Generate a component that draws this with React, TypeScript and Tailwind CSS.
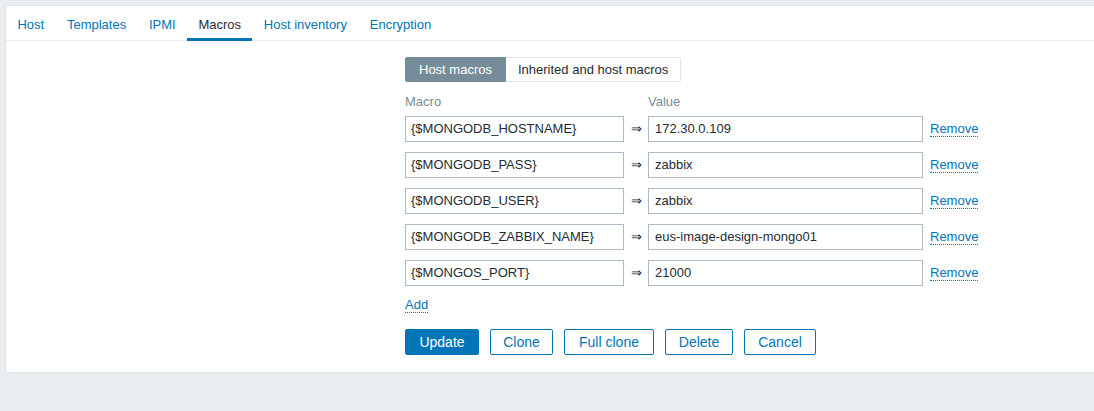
import React from "react";

const macros = [
  { name: "{$MONGODB_HOSTNAME}", value: "172.30.0.109" },
  { name: "{$MONGODB_PASS}", value: "zabbix" },
  { name: "{$MONGODB_USER}", value: "zabbix" },
  { name: "{$MONGODB_ZABBIX_NAME}", value: "eus-image-design-mongo01" },
  { name: "{$MONGOS_PORT}", value: "21000" },
];

const tabs = ["Host", "Templates", "IPMI", "Macros", "Host inventory", "Encryption"];

const secondary = [
  { label: "Clone", w: "w-[63px]" },
  { label: "Full clone", w: "w-[90px]" },
  { label: "Delete", w: "w-[68px]" },
  { label: "Cancel", w: "w-[72px]" },
];

export default function App() {
  return (
    <div
      className="w-[1094px] h-[411px] bg-[#ebeef0] pt-[5px] pl-[5px] overflow-hidden"
      style={{ fontFamily: '"Liberation Sans", Arial, sans-serif' }}
    >
      <div className="bg-white border border-r-0 border-[#dfe4e7] h-[368px]">
        <div className="flex h-[35px] border-b border-[#ebeef0] text-[13px]">
          {tabs.map((t) => (
            <div
              key={t}
              className={
                t === "Macros"
                  ? "px-[11.4px] flex items-center pt-[5px] border-b-[3px] border-[#0275b8] text-[#1f2c33] h-[35px] mb-[-1px]"
                  : "px-[11.4px] flex items-center pt-[5px] border-b-[3px] border-transparent text-[#0275b8] h-[35px] mb-[-1px]"
              }
            >
              {t}
            </div>
          ))}
        </div>

        <div className="pl-[399px] pt-[16px] text-[13px] text-[#1f2c33]">
          <div className="flex h-[25px]">
            <div className="bg-[#768d99] text-white px-[13px] flex items-center rounded-l-[2px] border border-[#768d99]">
              Host macros
            </div>
            <div className="bg-white px-[12px] flex items-center border border-l-0 border-[#dfe4e7] rounded-r-[2px]">
              Inherited and host macros
            </div>
          </div>

          <div className="flex mt-[13px] h-[14px] leading-[14px] text-[#768d99]">
            <div className="w-[243px]">Macro</div>
            <div>Value</div>
          </div>

          <div className="flex flex-col gap-[10px] mt-[7px]">
            {macros.map((m) => (
              <div key={m.name} className="flex items-center h-[26px]">
                <div className="w-[219px] h-[26px] border border-[#acbbc4] px-[5px] flex items-center">
                  {m.name}
                </div>
                <div className="w-[24px] text-center">⇒</div>
                <div className="w-[275px] h-[26px] border border-[#acbbc4] px-[6px] flex items-center">
                  {m.value}
                </div>
                <span className="ml-[7px] text-[#0275b8] border-b border-dotted border-[#0275b8] leading-[14px]">
                  Remove
                </span>
              </div>
            ))}
          </div>

          <div className="mt-[9px] h-[16px]">
            <span className="text-[#0275b8] border-b border-dotted border-[#0275b8] leading-[14px] inline-block">
              Add
            </span>
          </div>

          <div className="flex gap-[11px] mt-[18px] text-[14px]">
            <button className="h-[26px] w-[74px] bg-[#0275b8] border border-[#0275b8] text-white rounded-[2px]">
              Update
            </button>
            {secondary.map((b) => (
              <button
                key={b.label}
                className={`h-[26px] ${b.w} bg-white border border-[#0275b8] text-[#0275b8] rounded-[2px]`}
              >
                {b.label}
              </button>
            ))}
          </div>
        </div>
      </div>
    </div>
  );
}
